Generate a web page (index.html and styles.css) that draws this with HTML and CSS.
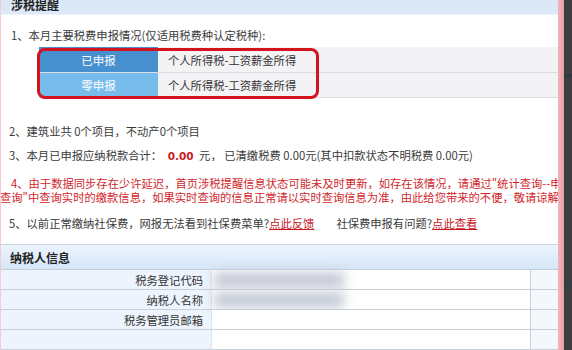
FILE: index.html
```html
<!DOCTYPE html>
<html lang="zh-CN">
<head>
<meta charset="utf-8">
<title>涉税提醒</title>
<link rel="stylesheet" href="styles.css">
</head>
<body>
<div class="frame">
  <div class="main">
    <div class="bar1"><span class="bar1-title">涉税提醒</span></div>
    <div class="notice">
      <div class="item item1">1、本月主要税费申报情况(仅适用税费种认定税种):</div>
      <div class="decl-wrap">
        <div class="decl">
          <div class="decl-row"><div class="tag tag-dark">已申报</div><div class="decl-val">个人所得税-工资薪金所得</div></div>
          <div class="decl-row"><div class="tag tag-light">零申报</div><div class="decl-val">个人所得税-工资薪金所得</div></div>
        </div>
        <div class="mark"></div>
      </div>
      <div class="item item2">2、建筑业共 0个项目，不动产0个项目</div>
      <div class="item item3">3、本月已申报应纳税款合计： <b class="amt">0.00</b> 元， 已清缴税费 0.00元(其中扣款状态不明税费 0.00元)</div>
      <div class="item4">
        <div class="l1">4、由于数据同步存在少许延迟，首页涉税提醒信息状态可能未及时更新，如存在该情况，请通过"统计查询--申报</div>
        <div class="l2">查询"中查询实时的缴款信息，如果实时查询的信息正常请以实时查询信息为准，由此给您带来的不便，敬请谅解。</div>
      </div>
      <div class="item item5">5、以前正常缴纳社保费，网报无法看到社保费菜单?<a class="lnk" href="#">点此反馈</a><span class="gap"></span>社保费申报有问题?<a class="lnk" href="#">点此查看</a></div>
    </div>
    <div class="bar2"><span class="bar2-title">纳税人信息</span></div>
    <div class="info">
      <div class="cell lbl">税务登记代码</div><div class="cell val"><div class="blur"></div></div><div class="cell ext"></div>
      <div class="cell lbl">纳税人名称</div><div class="cell val"><div class="blur"></div></div><div class="cell ext"></div>
      <div class="cell lbl">税务管理员邮箱</div><div class="cell val"></div><div class="cell ext"></div>
      <div class="cell lbl"></div><div class="cell val"></div><div class="cell ext"></div>
    </div>
  </div>
  <div class="edge"></div>
  <div class="dark"><div class="dark-a"></div><div class="dark-b"></div></div>
</div>
</body>
</html>
```
FILE: styles.css
```css
html, body {
  margin: 0;
  padding: 0;
}
body {
  width: 572px;
  height: 350px;
  overflow: hidden;
  font-family: "Noto Sans CJK SC", "Noto Sans", sans-serif;
  font-size: 11.3px;
  color: #3a3a3a;
  background: #3d3d3f;
}
.frame {
  display: flex;
  height: 350px;
}
.main {
  width: 557px;
  border-left: 1px solid #f2cdd1;
  background: #fff;
  overflow: hidden;
  display: flex;
  flex-direction: column;
}
.edge {
  width: 6px;
  background: linear-gradient(90deg, #f0b7bc, #e79ca3);
}
.dark {
  flex: 1;
  background: #3e3e40;
  display: flex;
  flex-direction: column;
}
.dark-a {
  margin-top: 74px;
  height: 3px;
  background: #2e3a3c;
}
.dark-b {
  margin-top: 203px;
  height: 10px;
  background: #34403f;
}

/* top bar */
.bar1 {
  height: 16px;
  background: linear-gradient(#d9e6f5, #dfeaf8);
  border-bottom: 1px solid #eef3f9;
  display: flex;
  align-items: flex-start;
  padding-left: 10px;
  overflow: hidden;
}
.bar1-title {
  font-weight: bold;
  font-size: 12px;
  line-height: 12px;
  margin-top: -1px;
  color: #222;
}

/* notice */
.notice {
  display: flex;
  flex-direction: column;
}
.item {
  line-height: 16px;
  white-space: nowrap;
  padding-left: 8px;
}
.item1 {
  margin-top: 12px;
  padding-left: 10px;
}
.decl-wrap {
  position: relative;
  margin-top: 4px;
  margin-left: 38px;
}
.decl {
  display: flex;
  flex-direction: column;
}
.decl-row {
  display: flex;
  height: 25px;
  border-bottom: 1px solid #dcdce2;
}
.decl-row + .decl-row {
  height: 24px;
}
.tag {
  width: 119px;
  color: #fff;
  text-align: center;
  display: flex;
  align-items: center;
  justify-content: center;
  font-size: 11.5px;
}
.tag-dark {
  background: #4790cf;
}
.tag-light {
  background: #78bcec;
}
.decl-val {
  flex: 1;
  background: #f3f2f5;
  display: flex;
  align-items: center;
  padding-left: 10px;
  color: #333;
}
.mark {
  position: absolute;
  left: -2px;
  top: 1px;
  width: 282px;
  height: 51px;
  box-sizing: border-box;
  border: 3.5px solid #d3131d;
  border-radius: 8px;
}
.item2 {
  margin-top: 25px;
}
.item3 {
  margin-top: 8px;
}
.amt {
  font-family: "DejaVu Sans", sans-serif;
  font-size: 10.5px;
  color: #c81e22;
  padding: 0 3px;
}
.item4 {
  margin-top: 12px;
  color: #d0262c;
  line-height: 14px;
  white-space: nowrap;
}
.l1 {
  padding-left: 10px;
}
.l2 {
  margin-left: -1px;
}
.item5 {
  margin-top: 11px;
}
.lnk {
  color: #c8161e;
  text-decoration: underline;
}
.gap {
  display: inline-block;
  width: 22px;
}

/* taxpayer info */
.bar2 {
  margin-top: 13px;
  height: 27px;
  border-top: 1px solid #c9d1db;
  border-bottom: 1px solid #c3cedb;
  background: linear-gradient(#ebf3fd, #d6e7f8);
  display: flex;
  align-items: center;
  padding-left: 9px;
}
.bar2-title {
  font-weight: bold;
  font-size: 12px;
  color: #222;
}
.info {
  display: grid;
  grid-template-columns: 211px 318px 1fr;
  grid-auto-rows: 20px;
}
.cell {
  border-bottom: 1px solid #c8ced6;
  box-sizing: border-box;
  display: flex;
  align-items: center;
  overflow: hidden;
}
.lbl {
  background: #edf4fd;
  justify-content: flex-end;
  padding-right: 8px;
  color: #333;
  border-right: 1px solid #dde5ee;
}
.val {
  background: #fff;
  position: relative;
  overflow: visible;
}
.ext {
  background: #f4f8fd;
  border-left: 1px solid #c8d0d8;
}
.blur {
  width: 130px;
  height: 16px;
  margin-left: 2px;
  background: #c3c9d5;
  filter: blur(6px);
}
```
